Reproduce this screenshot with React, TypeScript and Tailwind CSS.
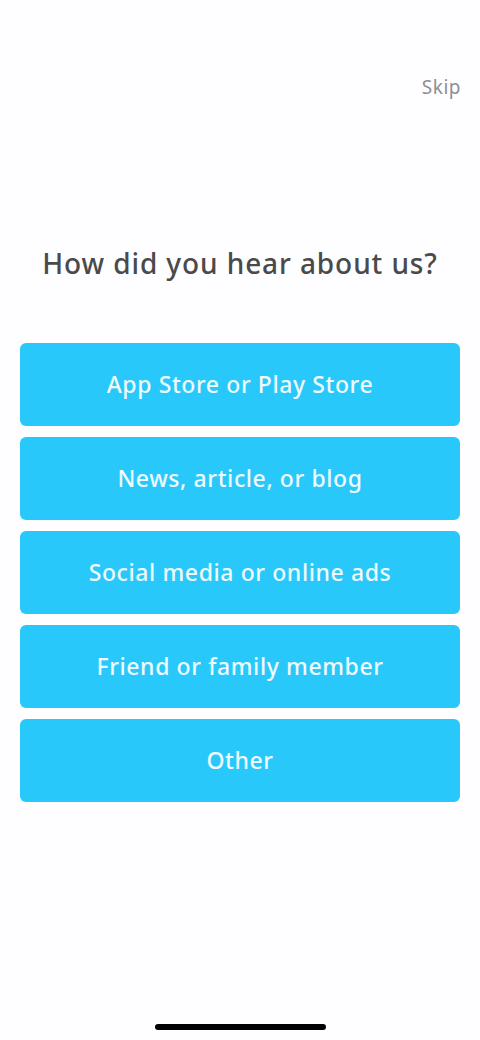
const options = [
  'App Store or Play Store',
  'News, article, or blog',
  'Social media or online ads',
  'Friend or family member',
  'Other',
];

export default function App() {
  return (
    <div
      className="relative flex h-[1040px] w-[480px] flex-col bg-[#fefdff]"
      style={{ fontFamily: '"Noto Sans", "Open Sans", sans-serif' }}
    >
      <div className="flex justify-end pr-[19px] pt-[74px]">
        <button className="text-[19px] leading-[26px] tracking-[0.5px] text-[#8e8e93]">Skip</button>
      </div>

      <h1 className="mt-[143px] text-center text-[28px] font-medium leading-[40px] tracking-[0.9px] text-[#4a4a4a]">
        How did you hear about us?
      </h1>

      <div className="mt-[60px] flex flex-col gap-[11px] px-[20px]">
        {options.map((o) => (
          <button
            key={o}
            className="flex h-[83px] items-center justify-center rounded-[6px] bg-[#28c9fa] text-[23px] font-medium tracking-[0.6px] text-[#eefaff]"
          >
            {o}
          </button>
        ))}
      </div>

      <div className="mt-auto flex justify-center pb-[10px]">
        <div className="h-[6px] w-[171px] rounded-full bg-black" />
      </div>
    </div>
  );
}
